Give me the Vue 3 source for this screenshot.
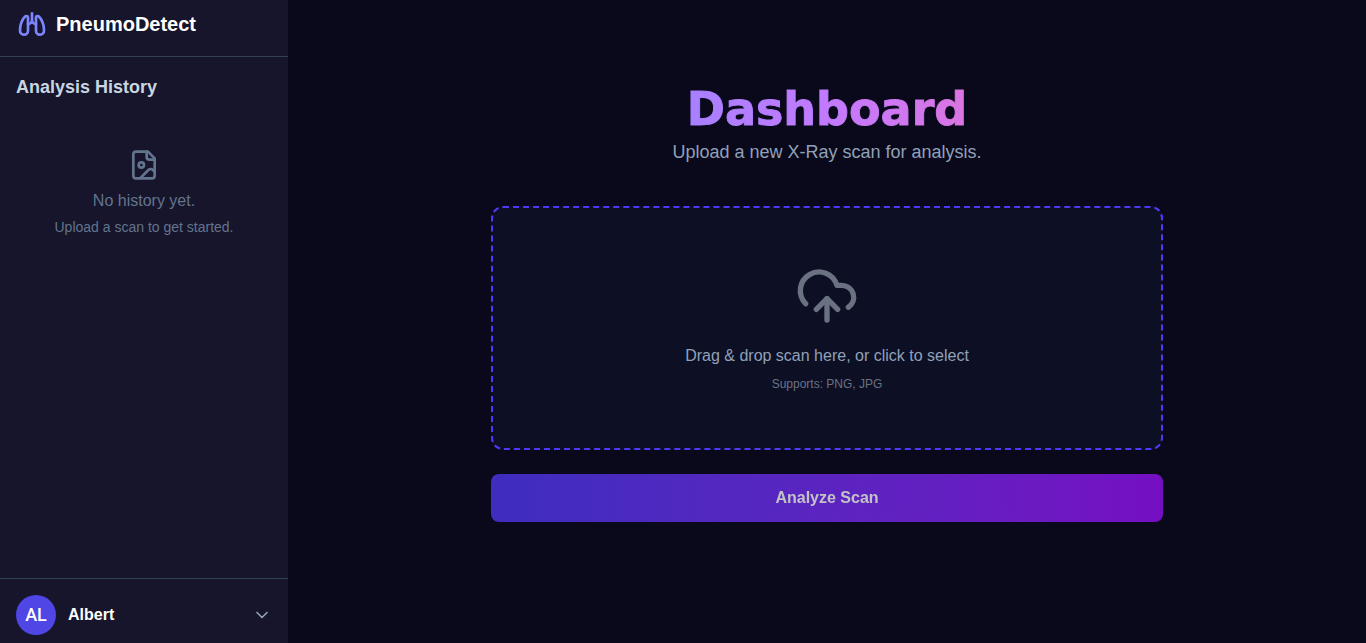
<script setup>
import { ref } from 'vue'

const user = { name: 'Albert', initials: 'AL' }
const file = ref(null)

function pick(event) {
  file.value = event.target.files[0] ?? null
}
</script>

<template>
  <div class="layout">
    <aside class="sidebar">
      <header class="brand">
        <svg class="brand-icon" viewBox="0 0 24 24" aria-hidden="true">
          <path d="M6.081 20c1.612 0 2.919-1.335 2.919-2.98V7.257C9 6.563 8.448 6 7.768 6c-.205 0-.405.052-.584.15l-.13.083c-1.46 1.059-2.432 2.647-3.404 5.824-.42 1.37-.636 2.962-.648 4.775-.012 1.675 1.261 3.054 2.877 3.161z" />
          <path d="M17.92 20c-1.613 0-2.92-1.335-2.92-2.98V7.257C15 6.563 15.552 6 16.233 6c.204 0 .405.052.584.15l.13.083c1.46 1.059 2.432 2.647 3.404 5.824.42 1.37.636 2.962.648 4.775.012 1.675-1.261 3.054-2.878 3.161z" />
          <path d="M9 12a3 3 0 0 0 3-3 3 3 0 0 0 3 3M12 4v5" />
        </svg>
        <span class="brand-name">PneumoDetect</span>
      </header>

      <section class="history">
        <h2>Analysis History</h2>
        <div class="empty">
          <svg class="empty-icon" viewBox="0 0 24 24" aria-hidden="true">
            <path d="M15 2H6a2 2 0 0 0-2 2v16a2 2 0 0 0 2 2h12a2 2 0 0 0 2-2V7Z" />
            <path d="M14 2v4a2 2 0 0 0 2 2h4" />
            <circle cx="10" cy="12" r="2" />
            <path d="m20 17-1.296-1.296a2.41 2.41 0 0 0-3.408 0L9 22" />
          </svg>
          <p>No history yet.</p>
          <p class="empty-hint">Upload a scan to get started.</p>
        </div>
      </section>

      <footer class="account">
        <button type="button" class="account-button">
          <span class="avatar">{{ user.initials }}</span>
          <span class="account-name">{{ user.name }}</span>
          <svg class="chevron" viewBox="0 0 24 24" aria-hidden="true">
            <path d="m6 9 6 6 6-6" />
          </svg>
        </button>
      </footer>
    </aside>

    <main class="main">
      <div class="content">
        <h1>Dashboard</h1>
        <p class="subtitle">Upload a new X-Ray scan for analysis.</p>

        <label class="dropzone" for="scan">
          <input id="scan" class="file-input" type="file" accept="image/png,image/jpeg" @change="pick" />
          <svg class="cloud" viewBox="0 0 24 24" aria-hidden="true">
            <path d="M12 13v8" />
            <path d="M4 14.899A7 7 0 1 1 15.71 8h1.79a4.5 4.5 0 0 1 2.5 8.242" />
            <path d="m8 17 4-4 4 4" />
          </svg>
          <span class="drop-text">Drag &amp; drop scan here, or click to select</span>
          <span class="drop-hint">Supports: PNG, JPG</span>
        </label>

        <button type="button" class="analyze" :disabled="!file">Analyze Scan</button>
      </div>
    </main>
  </div>
</template>

<style>
body {
  background: #0a081b;
}
</style>

<style scoped>
.layout {
  display: flex;
  min-height: 100vh;
  font-family: "Liberation Sans", Arial, sans-serif;
  font-size: 16px;
  line-height: 24px;
  color: #fff;
  background: #0a081b;
}

h1, h2, p {
  margin: 0;
}

svg {
  display: block;
  fill: none;
  stroke: currentColor;
  stroke-width: 2;
  stroke-linecap: round;
  stroke-linejoin: round;
}

button {
  font: inherit;
  border: 0;
  cursor: pointer;
}

.sidebar {
  display: flex;
  flex-direction: column;
  flex: none;
  width: 288px;
  background: #17152b;
}

.brand {
  display: flex;
  align-items: center;
  gap: 8px;
  padding: 8px 16px 16px;
  border-bottom: 1px solid #314158;
}

.brand-icon {
  width: 32px;
  height: 32px;
  color: #7c86ff;
}

.brand-name {
  font-size: 20px;
  line-height: 28px;
  font-weight: 700;
}

.history {
  flex: 1;
  padding: 16px;
}

h2 {
  font-size: 18px;
  line-height: 28px;
  font-weight: 700;
  color: #cad5e2;
}

.empty {
  display: flex;
  flex-direction: column;
  align-items: center;
  margin-top: 48px;
  color: #62748e;
}

.empty-icon {
  width: 32px;
  height: 32px;
  margin-bottom: 8px;
}

.empty-hint {
  margin-top: 4px;
  font-size: 14px;
  line-height: 20px;
}

.account {
  padding: 16px 16px 8px;
  border-top: 1px solid #314158;
}

.account-button {
  display: flex;
  align-items: center;
  gap: 12px;
  width: 100%;
  padding: 0;
  color: #fff;
  font-weight: 700;
  text-align: left;
  background: none;
}

.avatar {
  display: grid;
  place-items: center;
  width: 40px;
  height: 40px;
  border-radius: 50%;
  font-family: Roboto, sans-serif;
  font-size: 18px;
  font-weight: 500;
  background: #4f46e5;
}

.account-name {
  flex: 1;
}

.chevron {
  width: 20px;
  height: 20px;
  color: #90a1b9;
}

.main {
  flex: 1;
  padding: 84px 32px 32px;
}

.content {
  display: flex;
  flex-direction: column;
  max-width: 672px;
  margin: 0 auto;
}

h1 {
  font-family: "DejaVu Sans", sans-serif;
  font-size: 46px;
  line-height: 50px;
  font-weight: 700;
  text-align: center;
  color: transparent;
  background: linear-gradient(to right in oklab, #7c86ff, #c27aff, #fb64b6);
  background-clip: text;
  -webkit-text-stroke: 1px transparent;
}

.subtitle {
  margin-top: 4px;
  font-size: 18px;
  line-height: 28px;
  text-align: center;
  color: #90a1b9;
}

.dropzone {
  display: flex;
  flex-direction: column;
  align-items: center;
  margin-top: 40px;
  padding: 56px 24px;
  border: 2px dashed #4f39f6;
  border-radius: 12px;
  background: #0d0f24;
  cursor: pointer;
}

.file-input {
  position: absolute;
  width: 1px;
  height: 1px;
  opacity: 0;
}

.cloud {
  width: 64px;
  height: 64px;
  color: #6a7282;
}

.drop-text {
  margin-top: 16px;
  color: #90a1b9;
}

.drop-hint {
  margin-top: 8px;
  font-size: 12px;
  line-height: 16px;
  color: #6a7282;
}

.analyze {
  margin-top: 24px;
  padding: 12px 24px;
  border-radius: 8px;
  font-weight: 700;
  color: #fff;
  background: linear-gradient(to right in oklab, #4f39f6, #9810fa);
}

.analyze:disabled {
  opacity: 0.75;
  cursor: not-allowed;
}
</style>
